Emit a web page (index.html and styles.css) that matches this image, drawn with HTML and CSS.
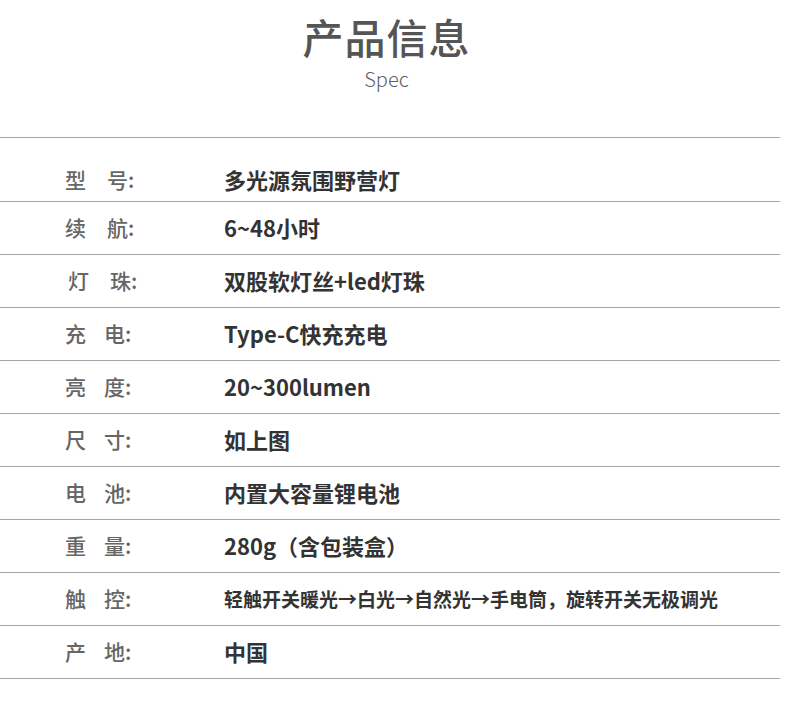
FILE: index.html
```html
<!DOCTYPE html>
<html lang="zh-CN">
<head>
<meta charset="utf-8">
<title>产品信息</title>
<link rel="stylesheet" href="styles.css">
</head>
<body>
<div class="page">
  <header class="head">
    <h1 class="title">产品信息</h1>
    <div class="sub">Spec</div>
  </header>
  <div class="row first">
    <div class="label wide"><span class="c1">型</span><span>号:</span></div>
    <div class="value">多光源氛围野营灯</div>
  </div>
  <div class="row">
    <div class="label wide"><span class="c1">续</span><span>航:</span></div>
    <div class="value">6~48小时</div>
  </div>
  <div class="row">
    <div class="label wide shift"><span class="c1">灯</span><span>珠:</span></div>
    <div class="value">双股软灯丝+led灯珠</div>
  </div>
  <div class="row">
    <div class="label"><span class="c1">充</span><span>电:</span></div>
    <div class="value">Type-C快充充电</div>
  </div>
  <div class="row">
    <div class="label"><span class="c1">亮</span><span>度:</span></div>
    <div class="value">20~300lumen</div>
  </div>
  <div class="row">
    <div class="label"><span class="c1">尺</span><span>寸:</span></div>
    <div class="value">如上图</div>
  </div>
  <div class="row">
    <div class="label"><span class="c1">电</span><span>池:</span></div>
    <div class="value">内置大容量锂电池</div>
  </div>
  <div class="row">
    <div class="label"><span class="c1">重</span><span>量:</span></div>
    <div class="value">280g（含包装盒）</div>
  </div>
  <div class="row">
    <div class="label"><span class="c1">触</span><span>控:</span></div>
    <div class="value small">轻触开关暖光→白光→自然光→手电筒，旋转开关无极调光</div>
  </div>
  <div class="row">
    <div class="label"><span class="c1">产</span><span>地:</span></div>
    <div class="value">中国</div>
  </div>
</div>
</body>
</html>
```
FILE: styles.css
```css
html, body {
  margin: 0;
  padding: 0;
  background: #ffffff;
}
body {
  font-family: "Noto Sans CJK SC", "Noto Sans", sans-serif;
}
.page {
  width: 780px;
}
.head {
  box-sizing: border-box;
  height: 138px;
  padding-top: 12px;
  padding-right: 7px;
  border-bottom: 1px solid #a6a6a6;
  text-align: center;
}
.title {
  margin: 0;
  font-size: 41px;
  line-height: 48px;
  font-weight: 500;
  color: #555555;
  letter-spacing: 1px;
}
.sub {
  margin-top: 7px;
  font-size: 20px;
  line-height: 24px;
  font-weight: 300;
  color: #5e5e5e;
}
.row {
  box-sizing: border-box;
  height: 53px;
  padding-bottom: 2px;
  display: flex;
  align-items: center;
  border-bottom: 1px solid #a6a6a6;
}
.row.first {
  height: 64px;
  padding-top: 18px;
  padding-bottom: 0;
}
.label {
  box-sizing: border-box;
  width: 224px;
  padding-left: 65px;
  display: flex;
  font-size: 21px;
  color: #666666;
  font-weight: 500;
}
.label .c1 {
  margin-right: 18px;
}
.label.wide .c1 {
  margin-right: 21px;
}
.label.shift {
  padding-left: 68px;
}
.value {
  font-size: 22px;
  font-weight: 700;
  color: #333333;
}
.value.small {
  font-size: 19px;
}
```
